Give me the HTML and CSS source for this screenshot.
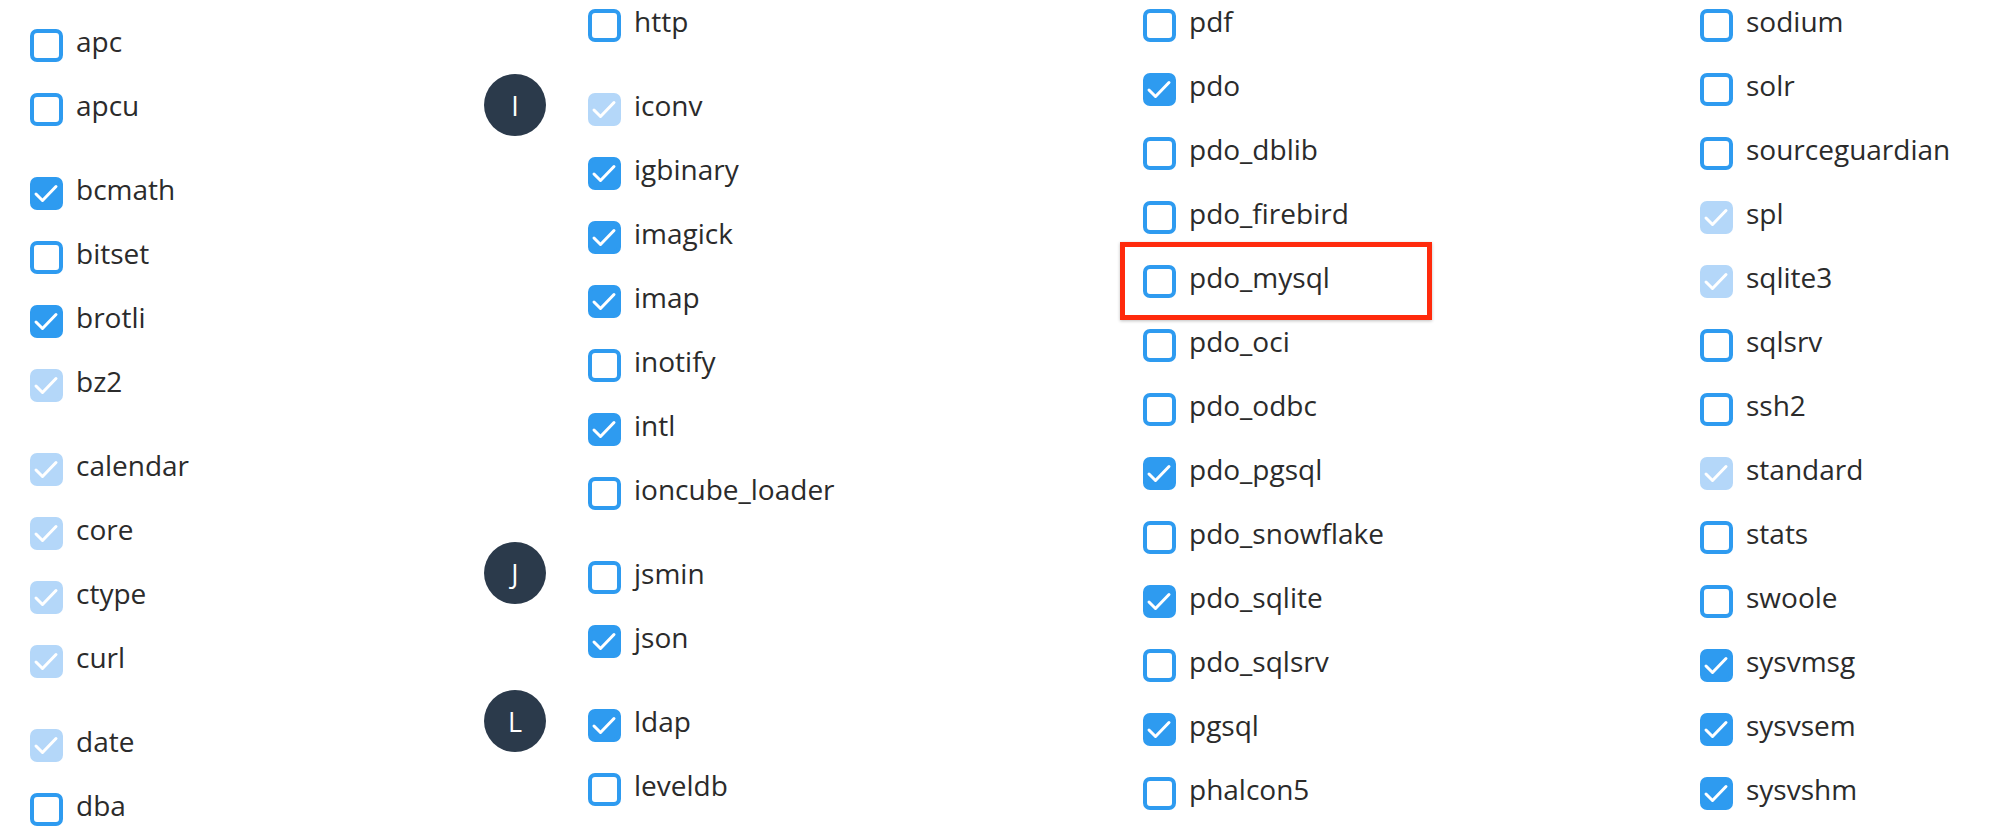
FILE: index.html
```html
<!DOCTYPE html>
<html lang="en">

<head>
    <meta charset="UTF-8">
    <title>Extensions</title>
    <link rel="stylesheet" href="styles.css">
</head>

<body>
    <div class="ext-grid">

        <!-- a - d -->
        <div class="col col-first">
            <div class="group">
                <div class="item"><span class="box"></span><span class="name">apc</span></div>
                <div class="item"><span class="box"></span><span class="name">apcu</span></div>
            </div>
            <div class="group">
                <div class="item"><span class="box on"><svg viewBox="0 0 33 33"><polyline points="6,17 12.5,23.5 26,9.5"/></svg></span><span class="name">bcmath</span></div>
                <div class="item"><span class="box"></span><span class="name">bitset</span></div>
                <div class="item"><span class="box on"><svg viewBox="0 0 33 33"><polyline points="6,17 12.5,23.5 26,9.5"/></svg></span><span class="name">brotli</span></div>
                <div class="item"><span class="box locked"><svg viewBox="0 0 33 33"><polyline points="6,17 12.5,23.5 26,9.5"/></svg></span><span class="name">bz2</span></div>
            </div>
            <div class="group">
                <div class="item"><span class="box locked"><svg viewBox="0 0 33 33"><polyline points="6,17 12.5,23.5 26,9.5"/></svg></span><span class="name">calendar</span></div>
                <div class="item"><span class="box locked"><svg viewBox="0 0 33 33"><polyline points="6,17 12.5,23.5 26,9.5"/></svg></span><span class="name">core</span></div>
                <div class="item"><span class="box locked"><svg viewBox="0 0 33 33"><polyline points="6,17 12.5,23.5 26,9.5"/></svg></span><span class="name">ctype</span></div>
                <div class="item"><span class="box locked"><svg viewBox="0 0 33 33"><polyline points="6,17 12.5,23.5 26,9.5"/></svg></span><span class="name">curl</span></div>
            </div>
            <div class="group">
                <div class="item"><span class="box locked"><svg viewBox="0 0 33 33"><polyline points="6,17 12.5,23.5 26,9.5"/></svg></span><span class="name">date</span></div>
                <div class="item"><span class="box"></span><span class="name">dba</span></div>
            </div>
        </div>

        <!-- h - l -->
        <div class="col">
            <div class="group lettered">
                <div class="letter-slot"></div>
                <div class="items">
                    <div class="item"><span class="box"></span><span class="name">http</span></div>
                </div>
            </div>
            <div class="group lettered">
                <div class="letter-slot"><span class="letter">I</span></div>
                <div class="items">
                    <div class="item"><span class="box locked"><svg viewBox="0 0 33 33"><polyline points="6,17 12.5,23.5 26,9.5"/></svg></span><span class="name">iconv</span></div>
                    <div class="item"><span class="box on"><svg viewBox="0 0 33 33"><polyline points="6,17 12.5,23.5 26,9.5"/></svg></span><span class="name">igbinary</span></div>
                    <div class="item"><span class="box on"><svg viewBox="0 0 33 33"><polyline points="6,17 12.5,23.5 26,9.5"/></svg></span><span class="name">imagick</span></div>
                    <div class="item"><span class="box on"><svg viewBox="0 0 33 33"><polyline points="6,17 12.5,23.5 26,9.5"/></svg></span><span class="name">imap</span></div>
                    <div class="item"><span class="box"></span><span class="name">inotify</span></div>
                    <div class="item"><span class="box on"><svg viewBox="0 0 33 33"><polyline points="6,17 12.5,23.5 26,9.5"/></svg></span><span class="name">intl</span></div>
                    <div class="item"><span class="box"></span><span class="name">ioncube_loader</span></div>
                </div>
            </div>
            <div class="group lettered">
                <div class="letter-slot"><span class="letter">J</span></div>
                <div class="items">
                    <div class="item"><span class="box"></span><span class="name">jsmin</span></div>
                    <div class="item"><span class="box on"><svg viewBox="0 0 33 33"><polyline points="6,17 12.5,23.5 26,9.5"/></svg></span><span class="name">json</span></div>
                </div>
            </div>
            <div class="group lettered">
                <div class="letter-slot"><span class="letter">L</span></div>
                <div class="items">
                    <div class="item"><span class="box on"><svg viewBox="0 0 33 33"><polyline points="6,17 12.5,23.5 26,9.5"/></svg></span><span class="name">ldap</span></div>
                    <div class="item"><span class="box"></span><span class="name">leveldb</span></div>
                </div>
            </div>
        </div>

        <!-- p -->
        <div class="col">
            <div class="group">
                <div class="item"><span class="box"></span><span class="name">pdf</span></div>
                <div class="item"><span class="box on"><svg viewBox="0 0 33 33"><polyline points="6,17 12.5,23.5 26,9.5"/></svg></span><span class="name">pdo</span></div>
                <div class="item"><span class="box"></span><span class="name">pdo_dblib</span></div>
                <div class="item"><span class="box"></span><span class="name">pdo_firebird</span></div>
                <div class="item marked"><span class="box"></span><span class="name">pdo_mysql</span></div>
                <div class="item"><span class="box"></span><span class="name">pdo_oci</span></div>
                <div class="item"><span class="box"></span><span class="name">pdo_odbc</span></div>
                <div class="item"><span class="box on"><svg viewBox="0 0 33 33"><polyline points="6,17 12.5,23.5 26,9.5"/></svg></span><span class="name">pdo_pgsql</span></div>
                <div class="item"><span class="box"></span><span class="name">pdo_snowflake</span></div>
                <div class="item"><span class="box on"><svg viewBox="0 0 33 33"><polyline points="6,17 12.5,23.5 26,9.5"/></svg></span><span class="name">pdo_sqlite</span></div>
                <div class="item"><span class="box"></span><span class="name">pdo_sqlsrv</span></div>
                <div class="item"><span class="box on"><svg viewBox="0 0 33 33"><polyline points="6,17 12.5,23.5 26,9.5"/></svg></span><span class="name">pgsql</span></div>
                <div class="item"><span class="box"></span><span class="name">phalcon5</span></div>
            </div>
        </div>

        <!-- s -->
        <div class="col">
            <div class="group">
                <div class="item"><span class="box"></span><span class="name">sodium</span></div>
                <div class="item"><span class="box"></span><span class="name">solr</span></div>
                <div class="item"><span class="box"></span><span class="name">sourceguardian</span></div>
                <div class="item"><span class="box locked"><svg viewBox="0 0 33 33"><polyline points="6,17 12.5,23.5 26,9.5"/></svg></span><span class="name">spl</span></div>
                <div class="item"><span class="box locked"><svg viewBox="0 0 33 33"><polyline points="6,17 12.5,23.5 26,9.5"/></svg></span><span class="name">sqlite3</span></div>
                <div class="item"><span class="box"></span><span class="name">sqlsrv</span></div>
                <div class="item"><span class="box"></span><span class="name">ssh2</span></div>
                <div class="item"><span class="box locked"><svg viewBox="0 0 33 33"><polyline points="6,17 12.5,23.5 26,9.5"/></svg></span><span class="name">standard</span></div>
                <div class="item"><span class="box"></span><span class="name">stats</span></div>
                <div class="item"><span class="box"></span><span class="name">swoole</span></div>
                <div class="item"><span class="box on"><svg viewBox="0 0 33 33"><polyline points="6,17 12.5,23.5 26,9.5"/></svg></span><span class="name">sysvmsg</span></div>
                <div class="item"><span class="box on"><svg viewBox="0 0 33 33"><polyline points="6,17 12.5,23.5 26,9.5"/></svg></span><span class="name">sysvsem</span></div>
                <div class="item"><span class="box on"><svg viewBox="0 0 33 33"><polyline points="6,17 12.5,23.5 26,9.5"/></svg></span><span class="name">sysvshm</span></div>
            </div>
        </div>

    </div>
</body>

</html>
```

FILE: styles.css
```css
body {
    margin: 0;
    background: #fff;
    font-family: 'Open Sans', 'Noto Sans', sans-serif;
    color: #2b2b2b;
    overflow: hidden;
}

.ext-grid {
    display: grid;
    grid-template-columns: 484px 659px 557px 1fr;
    height: 832px;
}

.col {
    display: flex;
    flex-direction: column;
    gap: 51px;
    padding-top: 9px;
}

.col-first {
    padding-top: 29px;
    padding-left: 30px;
}

.group,
.items {
    display: flex;
    flex-direction: column;
    gap: 31px;
}

.group.lettered {
    flex-direction: row;
    gap: 0;
}

.letter-slot {
    width: 104px;
    flex-shrink: 0;
}

.letter {
    display: flex;
    align-items: center;
    justify-content: center;
    width: 62px;
    height: 62px;
    margin-top: -19px;
    border-radius: 50%;
    background: #2b3a4b;
    color: #fff;
    font-size: 27px;
}

.item {
    display: flex;
    align-items: flex-start;
    gap: 13px;
    height: 33px;
}

.box {
    width: 33px;
    height: 33px;
    box-sizing: border-box;
    border: 4px solid #2e9bf0;
    border-radius: 7px;
    flex-shrink: 0;
    display: flex;
}

.box svg {
    width: 33px;
    height: 33px;
    margin: -4px;
    fill: none;
    stroke: #fff;
    stroke-width: 3;
    stroke-linecap: round;
    stroke-linejoin: round;
}

.box.on {
    background: #2e9bf0;
}

.box.locked {
    background: #b4d7f9;
    border-color: #b4d7f9;
}

.name {
    font-size: 28px;
    line-height: 33px;
    margin-top: -4px;
    white-space: nowrap;
}

/* annotation round the pdo_mysql row */
.marked {
    position: relative;
}

.marked::after {
    content: '';
    position: absolute;
    top: -23px;
    left: -23px;
    width: 312px;
    height: 78px;
    box-sizing: border-box;
    border: 5px solid #ff2a0c;
    box-shadow: 0 1px 3px rgba(0, 0, 0, 0.25);
}
```
